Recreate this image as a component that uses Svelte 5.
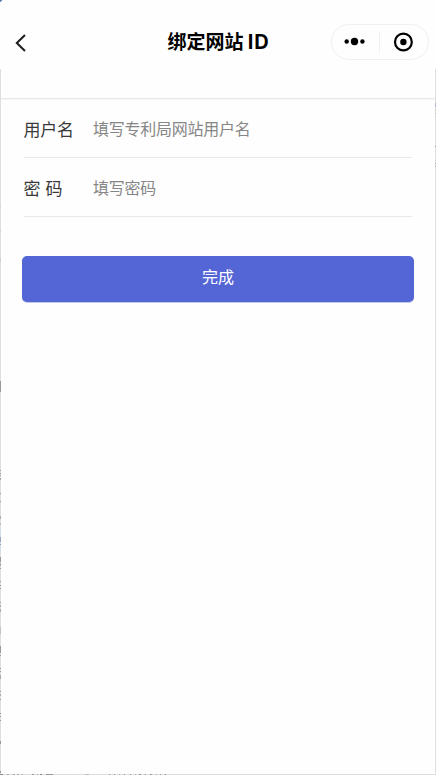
<script lang="ts">
    let username = $state('');
    let password = $state('');

    function submit(e: Event) {
        e.preventDefault();
    }

    // bits of the window behind that show along the frame: [offset, length, colour]
    const leftMarks: [number, number, string][] = [
        [206, 1, '#ccc'], [231, 1, '#ccc'], [258, 4, '#d0d0d0'],
        [381, 11, '#999'], [470, 1, '#999'], [473, 1, '#999'], [475, 1, '#aaa'], [478, 2, '#aaa'],
        [493, 1, '#999'], [501, 1, '#999'], [516, 3, '#aaa'], [523, 2, '#bbb'],
        [530, 21, '#cfdcef'], [537, 5, '#9aa5b5'], [544, 1, '#999'],
        [557, 5, '#999'], [563, 3, '#aaa'], [568, 1, '#999'],
        [581, 1, '#999'], [585, 1, '#999'], [588, 1, '#999'],
        [602, 1, '#999'], [605, 2, '#aaa'], [609, 3, '#aaa'],
        [627, 7, '#c0c0c0'], [646, 7, '#999'], [655, 1, '#999'],
        [668, 1, '#999'], [671, 1, '#999'], [675, 4, '#aaa'],
        [691, 1, '#999'], [694, 2, '#aaa'], [699, 1, '#999'],
        [713, 1, '#999'], [716, 1, '#999'], [720, 1, '#999'], [741, 3, '#999'], [771, 2, '#999']
    ];
    const rightMarks: [number, number, string][] = [
        [103, 4, '#a9b9cc'], [110, 1, '#bbb'], [113, 1, '#bbb'],
        [146, 1, '#999'], [163, 1, '#aaa'], [166, 1, '#aaa']
    ];
    const bottomMarks: [number, number, string][] = [
        [0, 3, '#888'], [7, 2, '#aaa'], [13, 2, '#aaa'], [17, 2, '#aaa'], [22, 1, '#aaa'],
        [32, 2, '#999'], [37, 1, '#aaa'], [40, 2, '#888'], [46, 7, '#999'],
        [74, 1, '#ccc'], [85, 4, '#bbb'], [109, 1, '#999'], [114, 1, '#999'], [119, 1, '#aaa'],
        [124, 1, '#999'], [130, 1, '#999'], [135, 1, '#aaa'], [139, 2, '#999'],
        [145, 1, '#999'], [150, 2, '#999'], [156, 1, '#aaa'], [160, 1, '#999'], [165, 1, '#999']
    ];
</script>

<style>
    :global(body) {
        background: #fefefe;
    }

    .page {
        position: relative;
        box-sizing: border-box;
        height: 775px;
        overflow: hidden;
        background: #fefefe;
        font-family: "Noto Sans CJK SC", sans-serif;
    }

    /* window frame, lies over the page */
    .frame {
        position: absolute;
        top: 0;
        left: 0;
        pointer-events: none;
    }

    header {
        box-sizing: border-box;
        height: 99px;
        padding: 24px 7px 0 13px;
        border-bottom: 1px solid #e8e8e8;
        box-shadow: 0 1px 0 #f7f7f7;
        display: grid;
        grid-template-columns: 98px 1fr 98px;
        align-items: start;
    }

    .back {
        height: 38px;
        padding: 0;
        border: none;
        background: none;
        display: flex;
        align-items: center;
    }

    h1 {
        margin: 0;
        padding-right: 5px;
        font-size: 19px;
        line-height: 33px;
        font-weight: bold;
        text-align: center;
        color: #000;
        white-space: nowrap;
    }

    .latin {
        font-family: Inter, sans-serif;
        font-size: 20px;
        line-height: 1;
        letter-spacing: 0.8px;
    }

    .capsule {
        box-sizing: border-box;
        width: 98px;
        height: 36px;
        border: 1px solid #f0f0f0;
        border-radius: 18px;
        display: flex;
        align-items: center;
    }

    .capsule svg {
        display: block;
    }

    form {
        padding: 0 22px;
    }

    .field {
        box-sizing: border-box;
        height: 59px;
        margin: 0 2px;
        border-bottom: 1px solid #e8e8e8;
        display: flex;
        align-items: center;
    }

    .field label {
        width: 69px;
        font-size: 17px;
        color: #3a3a3a;
        letter-spacing: -0.2px;
        word-spacing: 1.5px;
        text-indent: -0.5px;
    }

    .field input {
        flex: 1;
        min-width: 0;
        padding: 0 0 1px;
        border: none;
        outline: none;
        background: none;
        font-family: inherit;
        font-size: 16px;
        letter-spacing: -0.25px;
        color: #333;
    }

    .field input::placeholder {
        color: #868686;
        opacity: 1;
    }

    .submit {
        display: block;
        width: 100%;
        height: 46px;
        margin-top: 39px;
        padding: 0 0 6px;
        border: none;
        border-radius: 5px;
        background: #5465d6;
        box-shadow: 0 1px 0 #c5caeb;
        color: white;
        font-family: inherit;
        font-size: 16px;
    }
</style>

<div class="page">
    <header>
        <button class="back" aria-label="返回">
            <svg width="16" height="20" viewBox="0 0 16 20">
                <path d="M12 2 L3.8 10 L12 18" fill="none" stroke="#1c1c1c" stroke-width="2" />
            </svg>
        </button>
        <h1>绑定网站 <span class="latin">ID</span></h1>
        <div class="capsule">
            <svg width="96" height="34" viewBox="0 0 96 34">
                <circle cx="14.7" cy="16.5" r="2.2" />
                <circle cx="22.5" cy="16.5" r="3.7" />
                <circle cx="30.4" cy="16.5" r="2.2" />
                <path d="M47.5 7 V28" stroke="#efefef" />
                <circle cx="71.4" cy="17" r="8.4" fill="none" stroke="#000" stroke-width="2.2" />
                <circle cx="71.4" cy="17" r="3.2" />
            </svg>
        </div>
    </header>

    <form onsubmit={submit}>
        <div class="field">
            <label for="username">用户名</label>
            <input id="username" type="text" placeholder="填写专利局网站用户名" bind:value={username} />
        </div>
        <div class="field">
            <label for="password">密 码</label>
            <input id="password" type="password" placeholder="填写密码" bind:value={password} />
        </div>
        <button class="submit" type="submit">完成</button>
    </form>

    <svg class="frame" width="436" height="775" shape-rendering="crispEdges">
        <path d="M0 0 H2 V1 H1 V2 H0 Z" fill="#5b7fb5" />
        <path d="M0.5 69 V774.5 H435.5 V69" fill="none" stroke="#dedede" />
        {#each leftMarks as [y, h, color]}
            <rect x="0" {y} width="1" height={h} fill={color} />
        {/each}
        {#each rightMarks as [y, h, color]}
            <rect x="435" {y} width="1" height={h} fill={color} />
        {/each}
        {#each bottomMarks as [x, w, color]}
            <rect {x} y="774" width={w} height="1" fill={color} />
        {/each}
    </svg>
</div>
